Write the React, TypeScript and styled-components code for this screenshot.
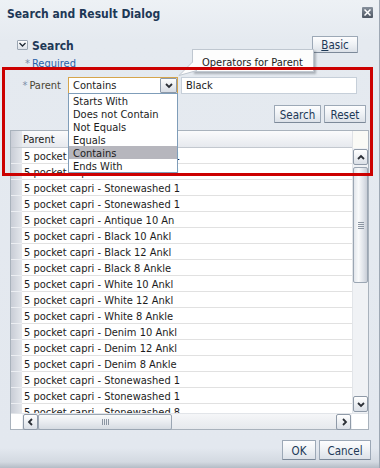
import React from "react";
import styled, { createGlobalStyle } from "styled-components";

const Global = createGlobalStyle`
  html, body { margin: 0; padding: 0; }
  body {
    font-family: "DejaVu Sans Condensed", "Liberation Sans", Arial, sans-serif;
    font-size: 11px;
    background: #e4e9f0;
  }
  * { box-sizing: border-box; }
`;

const Dialog = styled.div`
  position: relative;
  width: 380px;
  height: 468px;
  display: flex;
  flex-direction: column;
  background: linear-gradient(
    to bottom,
    #edf1f5 0px,
    #e5eaf0 40px,
    #e3e8ef 448px,
    #d3d9e1 462px,
    #b4bcc6 468px
  );
  border-right: 1px solid #9ea8b4;
  overflow: hidden;
`;

const TitleBar = styled.div`
  height: 28px;
  flex: none;
  display: flex;
  align-items: center;
  justify-content: space-between;
  padding: 0 6px 0 7px;
`;

const Title = styled.div`
  font-weight: bold;
  font-size: 12px;
  color: #1d3856;
`;

const CloseButton = styled.div`
  width: 11px;
  height: 11px;
  margin-top: -3px;
  border-radius: 1px;
  background: linear-gradient(#86909c, #4d5662);
  display: flex;
  align-items: center;
  justify-content: center;
`;

const SearchHeader = styled.div`
  height: 17px;
  margin-top: 8px;
  padding: 0 21px 0 17px;
  display: flex;
  align-items: center;
`;

const Disclosure = styled.span`
  width: 11px;
  height: 10px;
  border: 1px solid #9aa5b2;
  border-radius: 1px;
  background: linear-gradient(#ffffff, #dde2e9);
  display: flex;
  align-items: center;
  justify-content: center;
`;

const SectionTitle = styled.span`
  flex: 1;
  margin-left: 4px;
  padding-top: 2px;
  font-weight: bold;
  font-size: 12px;
  color: #1d3856;
`;

const Button = styled.button<{ $w: number; $h: number }>`
  width: ${(p) => p.$w}px;
  height: ${(p) => p.$h}px;
  padding: 1px 0 0 0;
  font-family: inherit;
  font-size: 11.5px;
  color: #1d3856;
  border: 1px solid #9ca8b6;
  border-bottom-color: #7c8999;
  border-radius: 1px;
  background: linear-gradient(#fdfdfe 0%, #f0f3f6 45%, #dce1e8 100%);
  display: inline-flex;
  align-items: center;
  justify-content: center;
`;

const RequiredNote = styled.div`
  height: 12px;
  margin-top: 4px;
  padding-left: 25px;
  line-height: 14px;
  font-size: 11px;
  color: #2861a9;
`;

const Asterisk = styled.span`
  color: #7b8ea8;
  margin-right: 2px;
`;

const CriteriaRow = styled.div`
  height: 18px;
  margin-top: 7px;
  display: flex;
  align-items: center;
`;

const FieldLabel = styled.label`
  width: 68px;
  padding-right: 7px;
  padding-top: 1px;
  text-align: right;
  font-size: 11px;
  color: #4a4534;
`;

const SelectBox = styled.div`
  position: relative;
  width: 110px;
  height: 17px;
  border: 1px solid #d6a54c;
  background: #fff;
  display: flex;
  align-items: center;
`;

const SelectText = styled.span`
  flex: 1;
  padding-left: 4px;
  padding-top: 1px;
  color: #1c1c1c;
`;

const SelectArrow = styled.span`
  width: 17px;
  height: 15px;
  border: 1px solid #8d99a8;
  border-radius: 1px;
  background: linear-gradient(#fdfdfd, #d8dde4);
  display: flex;
  align-items: center;
  justify-content: center;
`;

const OptionList = styled.ul`
  position: absolute;
  left: -1px;
  top: 100%;
  width: 110px;
  margin: 0;
  padding: 0;
  list-style: none;
  background: #fff;
  border: 1px solid #7f9db9;
  z-index: 3;
`;

const OptionItem = styled.li<{ $active?: boolean }>`
  height: 13px;
  line-height: 15px;
  overflow: hidden;
  padding-left: 4px;
  color: #1c1c1c;
  background: ${(p) => (p.$active ? "#b6b6bd" : "transparent")};
`;

const TextInput = styled.input`
  width: 176px;
  height: 17px;
  margin: 0 0 0 3px;
  padding: 1px 0 0 4px;
  border: 1px solid #c6cfd9;
  background: #fff;
  font-family: inherit;
  font-size: 11px;
  color: #1c1c1c;
  outline: none;
`;

const ActionRow = styled.div`
  display: flex;
  justify-content: flex-end;
  gap: 3px;
  margin-top: 11px;
  padding-right: 13px;
`;

const Table = styled.div`
  width: 359px;
  height: 300px;
  margin: 7px 0 0 10px;
  border: 1px solid #a9b2bc;
  background: #fff;
  display: grid;
  grid-template-columns: 11px 1fr 16px;
  grid-template-rows: 17px 1fr 16px;
`;

const HeaderCorner = styled.div`
  background: linear-gradient(to right, #c9cdd6, #e3e6eb);
  border-bottom: 1px solid #c3c8cf;
`;

const HeaderCell = styled.div`
  padding-left: 1px;
  line-height: 18px;
  overflow: hidden;
  color: #1c1c1c;
  background: linear-gradient(#fbfbfc, #e6e9ee);
  border-bottom: 1px solid #c3c8cf;
`;

const TopRightCorner = styled.div`
  background: #fafaf6;
  border-left: 1px solid #dfe2e6;
`;

const Body = styled.div`
  grid-column: 1 / 3;
  overflow: hidden;
`;

const Row = styled.div`
  display: grid;
  grid-template-columns: 11px 1fr;
  height: 16px;
`;

const RowHeader = styled.div`
  background: linear-gradient(to right, #c9cdd6, #e4e7ec);
  border-bottom: 1px solid #eceef2;
`;

const DataCell = styled.div`
  padding-left: 2px;
  line-height: 18px;
  white-space: nowrap;
  overflow: hidden;
  color: #1c1c1c;
  border-bottom: 1px solid #e1e1e1;
`;

const VScroll = styled.div`
  display: flex;
  flex-direction: column;
  padding: 1px 0 1px 0;
  background: #f0f2f5;
  border-left: 1px solid #e2e5e9;
`;

const ScrollButton = styled.div`
  width: 15px;
  height: 16px;
  flex: none;
  border: 1px solid #8f9aa8;
  border-radius: 2px;
  background: linear-gradient(#ffffff, #dbe0e7);
  display: flex;
  align-items: center;
  justify-content: center;
`;

const VThumb = styled.div`
  width: 15px;
  height: 116px;
  margin-top: 2px;
  border: 1px solid #9ba6b3;
  border-radius: 2px;
  background: linear-gradient(to right, #e2e6ec, #f9fafb 35%, #dde1e8 75%, #c9ced7);
  display: flex;
  align-items: center;
  justify-content: center;
`;

const HThumb = styled.div`
  width: 134px;
  height: 16px;
  border: 1px solid #9ba6b3;
  border-radius: 2px;
  background: linear-gradient(#f9fafb, #e9ecf0 50%, #d6dbe2);
  display: flex;
  align-items: center;
  justify-content: center;
`;

const Spacer = styled.div`
  flex: 1;
`;

const BottomCorner = styled.div`
  background: #fff;
  border-top: 1px solid #e2e5e9;
`;

const HScroll = styled.div`
  display: flex;
  align-items: stretch;
  padding: 0 1px;
  background: linear-gradient(#f5f6f8, #e6e9ed);
  border-top: 1px solid #e2e5e9;
`;

const Footer = styled.div`
  display: flex;
  justify-content: flex-end;
  gap: 3px;
  margin-top: 10px;
  padding-right: 8px;
`;

const Tooltip = styled.div`
  position: absolute;
  left: 192px;
  top: 49px;
  width: 122px;
  height: 23px;
  padding-left: 9px;
  line-height: 25px;
  color: #1c1c1c;
  background: #fdfdfd;
  border: 1px solid #bfc7d0;
  box-shadow: 2px 2px 2px rgba(60, 70, 80, 0.35);
  z-index: 4;
`;

const TipPointer = styled.svg`
  position: absolute;
  left: 177px;
  top: 60px;
  z-index: 5;
`;

const Highlight = styled.div`
  position: absolute;
  left: 2px;
  top: 67px;
  width: 371px;
  height: 109px;
  border: 3px solid #cc0000;
  pointer-events: none;
  z-index: 6;
`;

const Chevron = ({ dir, size = 8 }: { dir: "up" | "down" | "left" | "right"; size?: number }) => {
  const d = {
    up: "M1 6 L4 3 L7 6",
    down: "M1 3 L4 6 L7 3",
    left: "M5 1 L2 4 L5 7",
    right: "M3 1 L6 4 L3 7",
  }[dir];
  return (
    <svg width={size} height={size} viewBox="0 0 8 8">
      <path d={d} fill="none" stroke="#2b2f36" strokeWidth="1.8" />
    </svg>
  );
};

const Grip = ({ vertical }: { vertical: boolean }) =>
  vertical ? (
    <svg width="8" height="8" viewBox="0 0 8 8">
      <path d="M1 1.5H7M1 3.5H7M1 5.5H7M1 7.5H7" stroke="#8b95a2" strokeWidth="1" />
    </svg>
  ) : (
    <svg width="8" height="8" viewBox="0 0 8 8">
      <path d="M1.5 1V7M3.5 1V7M5.5 1V7M7.5 1V7" stroke="#8b95a2" strokeWidth="1" />
    </svg>
  );

const operators = ["Starts With", "Does not Contain", "Not Equals", "Equals", "Contains", "Ends With"];

const rows = [
  "5 pocket capri - Stonewashed 1",
  "5 pocket capri - Stonewashed 1",
  "5 pocket capri - Stonewashed 1",
  "5 pocket capri - Stonewashed 1",
  "5 pocket capri - Antique 10 An",
  "5 pocket capri - Black 10 Ankl",
  "5 pocket capri - Black 12 Ankl",
  "5 pocket capri - Black 8 Ankle",
  "5 pocket capri - White 10 Ankl",
  "5 pocket capri - White 12 Ankl",
  "5 pocket capri - White 8 Ankle",
  "5 pocket capri - Denim 10 Ankl",
  "5 pocket capri - Denim 12 Ankl",
  "5 pocket capri - Denim 8 Ankle",
  "5 pocket capri - Stonewashed 1",
  "5 pocket capri - Stonewashed 1",
  "5 pocket capri - Stonewashed 8",
];

export default function App() {
  return (
    <>
      <Global />
      <Dialog>
        <TitleBar>
          <Title>Search and Result Dialog</Title>
          <CloseButton>
            <svg width="7" height="7" viewBox="0 0 7 7">
              <path d="M0.5 0.5L6.5 6.5M6.5 0.5L0.5 6.5" stroke="#fff" strokeWidth="1.5" />
            </svg>
          </CloseButton>
        </TitleBar>

        <SearchHeader>
          <Disclosure>
            <svg width="7" height="5" viewBox="0 0 7 5">
              <path d="M0.5 1L3.5 4L6.5 1" fill="none" stroke="#1f2a36" strokeWidth="1.3" />
            </svg>
          </Disclosure>
          <SectionTitle>Search</SectionTitle>
          <Button $w={46} $h={17}>
            <u>B</u>asic
          </Button>
        </SearchHeader>

        <RequiredNote>
          <Asterisk>*</Asterisk>Required
        </RequiredNote>

        <CriteriaRow>
          <FieldLabel>
            <Asterisk>*</Asterisk>Parent
          </FieldLabel>
          <SelectBox>
            <SelectText>Contains</SelectText>
            <SelectArrow>
              <Chevron dir="down" size={8} />
            </SelectArrow>
            <OptionList>
              {operators.map((op) => (
                <OptionItem key={op} $active={op === "Contains"}>
                  {op}
                </OptionItem>
              ))}
            </OptionList>
          </SelectBox>
          <TextInput readOnly defaultValue="Black" />
        </CriteriaRow>

        <ActionRow>
          <Button $w={47} $h={18}>Search</Button>
          <Button $w={42} $h={18}>Reset</Button>
        </ActionRow>

        <Table>
          <HeaderCorner />
          <HeaderCell>Parent</HeaderCell>
          <TopRightCorner />
          <Body>
            {rows.map((r, i) => (
              <Row key={i}>
                <RowHeader />
                <DataCell>{r}</DataCell>
              </Row>
            ))}
          </Body>
          <VScroll>
            <ScrollButton>
              <Chevron dir="up" />
            </ScrollButton>
            <VThumb>
              <Grip vertical />
            </VThumb>
            <Spacer />
            <ScrollButton>
              <Chevron dir="down" />
            </ScrollButton>
          </VScroll>
          <BottomCorner />
          <HScroll>
            <ScrollButton>
              <Chevron dir="left" />
            </ScrollButton>
            <HThumb>
              <Grip vertical={false} />
            </HThumb>
            <Spacer />
            <ScrollButton>
              <Chevron dir="right" />
            </ScrollButton>
          </HScroll>
          <BottomCorner />
        </Table>

        <Footer>
          <Button $w={34} $h={20}>OK</Button>
          <Button $w={52} $h={20}>Cancel</Button>
        </Footer>

        <Tooltip>Operators for Parent</Tooltip>
        <TipPointer width="20" height="18" viewBox="0 0 20 18">
          <path d="M15.5 2 L2 15.5 L20 10.5" fill="#fdfdfd" stroke="#bfc7d0" strokeWidth="1" />
        </TipPointer>
        <Highlight />
      </Dialog>
    </>
  );
}
